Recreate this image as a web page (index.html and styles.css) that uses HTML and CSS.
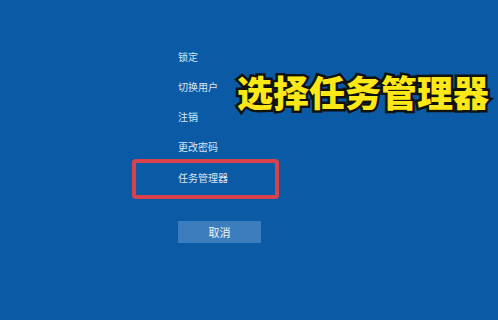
FILE: index.html
```html
<!DOCTYPE html>
<html lang="zh-CN">

<head>
    <meta charset="UTF-8">
    <meta name="viewport" content="width=device-width, initial-scale=1.0">
    <title>选择任务管理器</title>
    <link rel="stylesheet" href="styles.css">
</head>

<body>
    <div class="screen">
        <ul class="menu">
            <li class="menu-item">锁定</li>
            <li class="menu-item">切换用户</li>
            <li class="menu-item">注销</li>
            <li class="menu-item">更改密码</li>
            <li class="menu-item highlight">任务管理器</li>
        </ul>
        <button class="cancel-btn">取消</button>

        <div class="caption">选择任务管理器</div>
    </div>
</body>

</html>
```

FILE: styles.css
```css
body {
    margin: 0;
    font-family: "Noto Sans CJK SC", "Microsoft YaHei", sans-serif;
    background-color: #0b5aa5;
}

.screen {
    position: relative;
    width: 498px;
    height: 320px;
    padding: 42px 0 0 132px;
    box-sizing: border-box;
    overflow: hidden;
}

.menu {
    list-style: none;
    margin: 0;
    padding: 0;
    display: flex;
    flex-direction: column;
}

.menu-item {
    height: 30px;
    line-height: 30px;
    padding-left: 46px;
    font-size: 10px;
    color: #dce7f2;
}

.highlight {
    width: 147px;
    height: 40px;
    line-height: 30px;
    margin-top: -3px;
    padding-left: 42px;
    box-sizing: border-box;
    border: 4px solid #d9414b;
    border-radius: 4px;
}

.cancel-btn {
    display: block;
    width: 83px;
    height: 22px;
    margin: 22px 0 0 46px;
    padding: 0;
    border: none;
    background-color: #3c7dbd;
    color: #f2f6fa;
    font-family: inherit;
    font-size: 11px;
}

/* yellow caption laid over the screenshot */
.caption {
    position: absolute;
    left: 237px;
    top: 69px;
    font-size: 36px;
    font-weight: 900;
    line-height: 44px;
    color: #fbe816;
    -webkit-text-stroke: 5px #111;
    paint-order: stroke fill;
    letter-spacing: 0;
}
```
